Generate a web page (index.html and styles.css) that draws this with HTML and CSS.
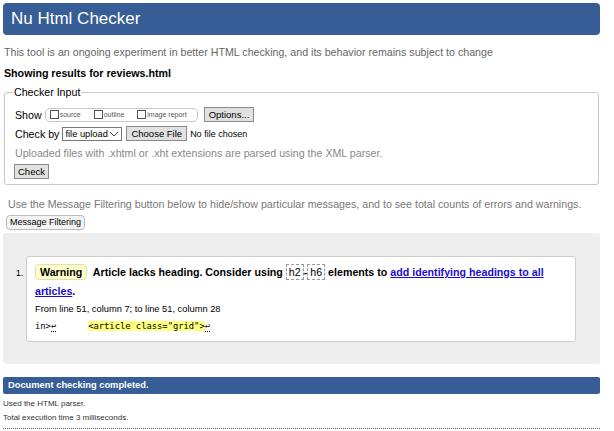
FILE: index.html
```html
<!DOCTYPE html>
<html>
<head>
<meta charset="utf-8">
<title>Nu Html Checker</title>
<link rel="stylesheet" href="styles.css">
</head>
<body>
<div class="page">
  <h1 class="title">Nu Html Checker</h1>
  <p class="intro">This tool is an ongoing experiment in better HTML checking, and its behavior remains subject to change</p>
  <p class="showing">Showing results for reviews.html</p>
  <fieldset class="input">
    <legend>Checker Input</legend>
    <div class="row">
      <span class="lbl">Show</span>
      <span class="opts">
        <label><span class="cb"></span>source</label>
        <label><span class="cb"></span>outline</label>
        <label><span class="cb"></span>image report</label>
      </span>
      <button class="btn">Options...</button>
    </div>
    <div class="row">
      <span class="lbl">Check by</span>
      <span class="select">file upload <svg width="10" height="6" viewBox="0 0 10 6"><path d="M1 1 L5 5 L9 1" fill="none" stroke="#444" stroke-width="1"/></svg></span>
      <button class="btn">Choose File</button>
      <span class="nofile">No file chosen</span>
    </div>
    <p class="note">Uploaded files with .xhtml or .xht extensions are parsed using the XML parser.</p>
    <button class="btn check">Check</button>
  </fieldset>
  <p class="filter-note">Use the Message Filtering button below to hide/show particular messages, and to see total counts of errors and warnings.</p>
  <button class="btn round">Message Filtering</button>
  <div class="results">
    <ol class="msgs">
      <li>
        <div class="msg">
          <p class="head"><span class="badge">Warning</span> Article lacks heading. Consider using <code class="el">h2</code>-<code class="el">h6</code> elements to <a href="#">add identifying headings to all articles</a>.</p>
          <p class="loc">From line 51, column 7; to line 51, column 28</p>
          <p class="ext"><code>in&gt;<span class="lf">↩</span></code><code class="hl">&lt;article class="grid"&gt;</code><code><span class="lf">↩</span></code></p>
        </div>
      </li>
    </ol>
  </div>
  <h2 class="done">Document checking completed.</h2>
  <p class="small">Used the HTML parser.</p>
  <p class="small">Total execution time 3 milliseconds.</p>
  <hr class="dots">
</div>
</body>
</html>
```
FILE: styles.css
```css
* { box-sizing: border-box; }
html, body { margin: 0; padding: 0; background: #fff; }
body { font-family: "Liberation Sans", Arial, sans-serif; color: #000; }
.page { width: 597px; margin: 3px 0 0 3px; }
p { margin: 0; }
.title {
  margin: 0;
  height: 32px;
  background: #365d95;
  color: #fff;
  border-radius: 4px;
  font-weight: normal;
  font-size: 17px;
  line-height: 32px;
  padding-left: 8px;
}
.intro { color: #666; font-size: 10.67px; line-height: 13px; margin: 11px 0 0 1px; }
.showing { font-weight: bold; font-size: 10.67px; line-height: 13px; margin: 8px 0 0 1px; }
.input {
  margin: 6px 0 0 1px;
  width: 595px;
  border: 1px solid #c8c8c8;
  border-radius: 3px;
  padding: 6px 10px 5px 10px;
  min-inline-size: 0;
}
.input legend { font-size: 10.67px; padding: 0 1px; line-height: 13px; margin-left: -2px; }
.row { display: flex; align-items: center; height: 19px; font-size: 10.67px; }
.lbl { margin-right: 3px; }
.opts {
  display: inline-flex; align-items: center;
  border: 1px solid #c8c8c8; border-radius: 5px;
  height: 14px; width: 153px; padding: 0 3px 0 4px; margin-right: 6px;
  font-size: 7px; color: #555;
}
.opts label { display: inline-flex; align-items: center; margin-right: 13px; }
.opts label:last-child { margin-right: 0; }
.cb { display: inline-block; width: 9px; height: 9px; border: 1px solid #555; margin-right: 1px; background: #fff; }
.btn {
  font-family: "Liberation Sans", Arial, sans-serif;
  font-size: 9.5px;
  background: #e1e1e1;
  border: 1px solid #8a8a8a;
  border-radius: 0;
  padding: 0 4px;
  height: 15px;
  line-height: 13px;
  color: #000;
}
.select {
  display: inline-flex; align-items: center; justify-content: space-between;
  white-space: nowrap;
  border: 1px solid #767676; height: 14px; width: 60px; padding: 0 2px 0 2px;
  font-size: 9.3px; margin-right: 4px;
}
.nofile { font-size: 9px; margin-left: 3px; }
.note { color: #888; font-size: 10.67px; line-height: 13px; margin-top: 4px; }
.check { margin-top: 4px; margin-left: -1px; padding: 0 3px; }
.filter-note { color: #777; font-size: 10.67px; line-height: 13px; margin: 13px 0 0 5px; }
.round { border-radius: 4px; border-color: #bbb; background: #f3f3f3; margin: 4px 0 0 3px; height: 15px; padding: 0 3px; font-size: 9px; }
.results {
  margin-top: 3px;
  background: #eee;
  border-radius: 3px;
  padding: 23px 24px 22px 0;
}
.msgs { margin: 0; padding: 0 0 0 23px; font-size: 9.3px; }
.msg {
  background: #fff;
  border: 1px solid #ccc;
  border-radius: 3px;
  padding: 6px 8px 9px 8px;
  font-size: 10.67px;
}
.head { font-weight: bold; line-height: 19px; }
.badge {
  display: inline-block;
  background: #ffc;
  border: 1px solid #e0e0b0;
  border-radius: 4px;
  padding: 0 4px;
  line-height: 14px;
  margin-right: 3px;
}
.el {
  font-family: "Liberation Sans", Arial, sans-serif;
  font-weight: normal;
  font-size: 10.67px;
  border: 1px dashed #999;
  padding: 0 2px;
  line-height: 14px;
  display: inline-block;
}
.head a { color: #1a0dcd; text-decoration: underline; }
.loc { font-size: 9.3px; line-height: 12px; margin-top: 2px; }
.ext { line-height: 12px; margin-top: 4px; white-space: pre; }
.ext code { font-family: "DejaVu Sans Mono", monospace; font-size: 8.8px; }
.lf { border-bottom: 1px dotted #000; }
.hl { background: #ffff80; margin-left: 32px; }
.done {
  margin: 13px 0 0 0;
  height: 17px;
  background: #365d95;
  color: #fff;
  font-size: 9.33px;
  line-height: 17px;
  padding-left: 5px;
  border-radius: 2px;
}
.small { font-size: 8px; color: #333; line-height: 10px; margin-top: 5px; }
.small + .small { margin-top: 4px; }
.dots { border: 0; border-top: 1px dotted #666; margin: 5px 0 0 0; }
```
